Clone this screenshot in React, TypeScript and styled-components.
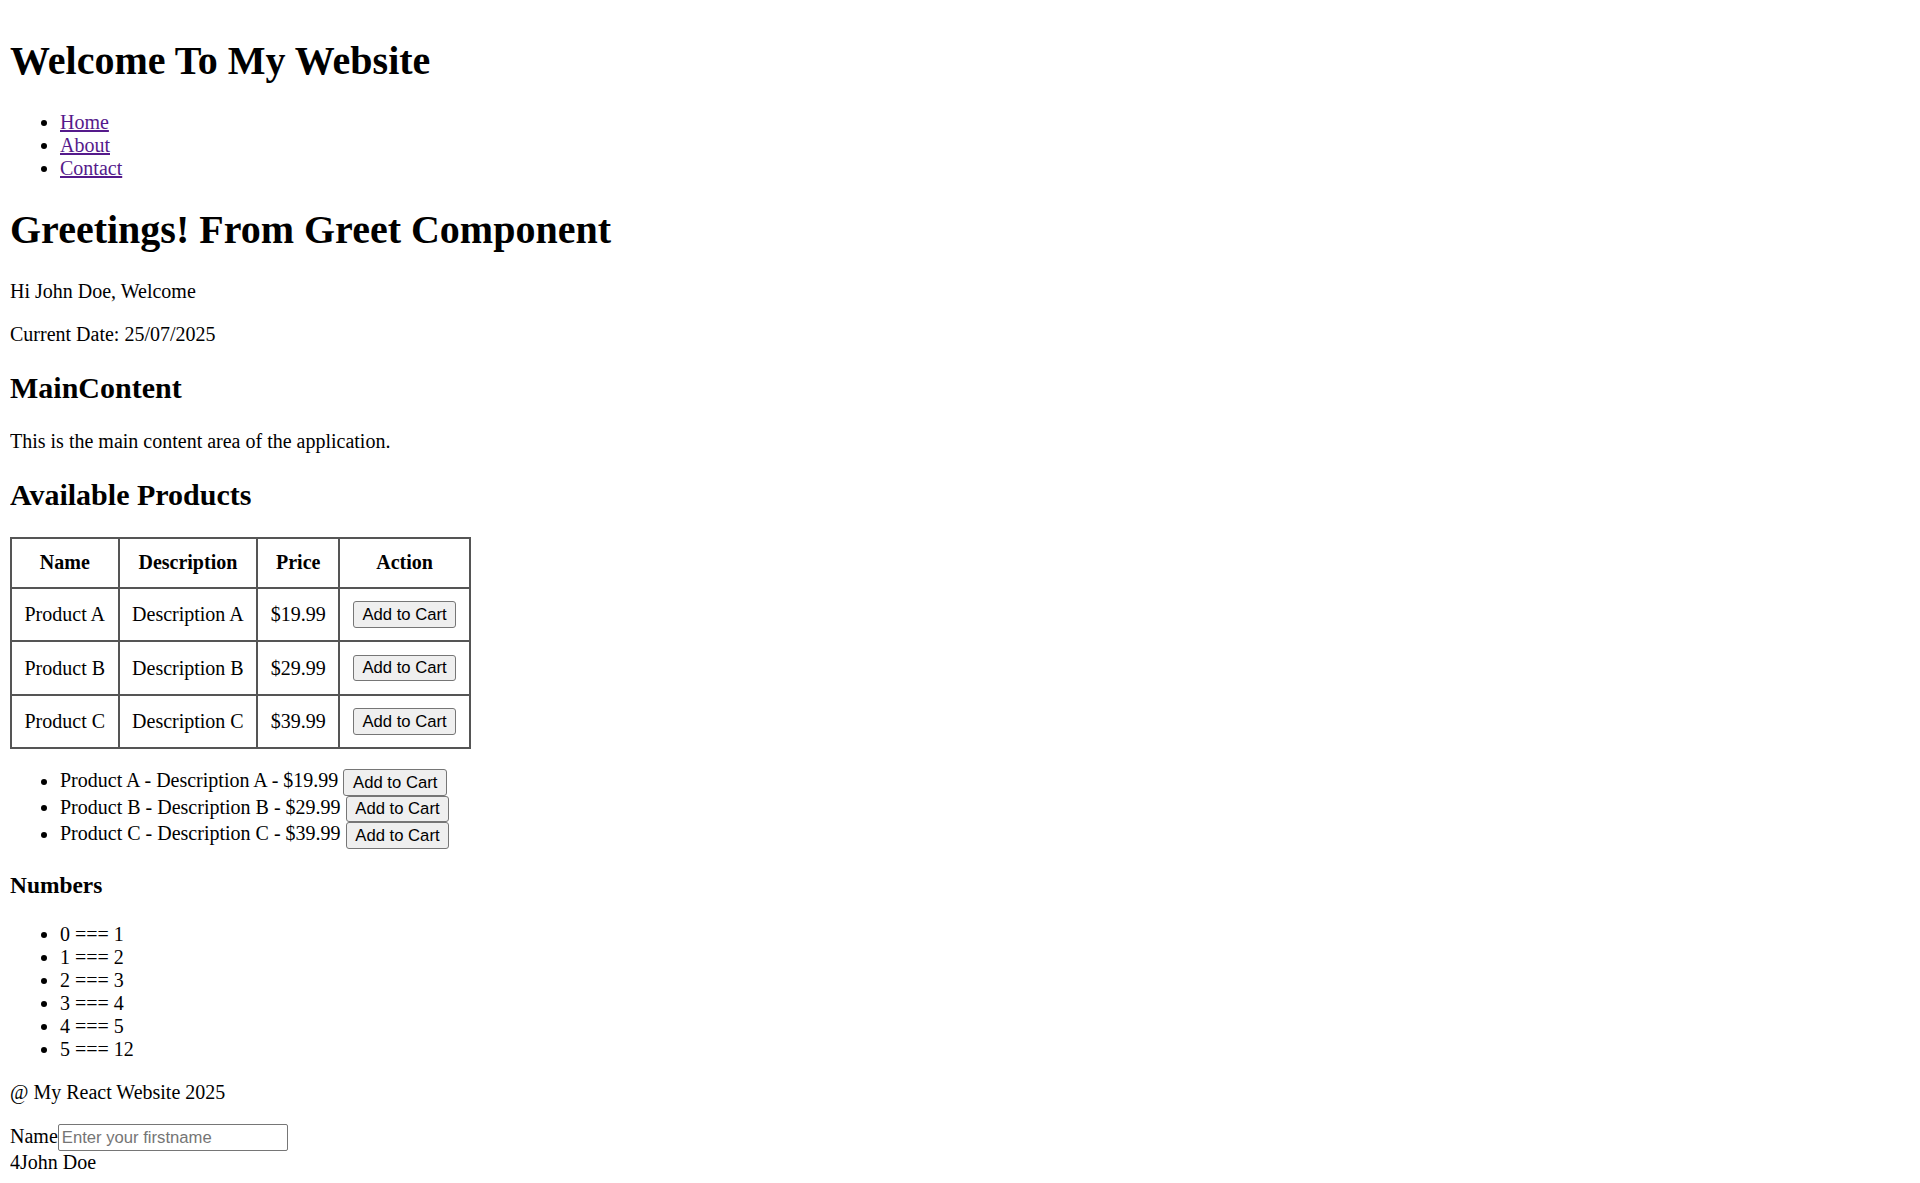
import React from 'react'
import styled, { createGlobalStyle } from 'styled-components'

const GlobalStyle = createGlobalStyle`
  body {
    margin: 10px;
    font-family: "Liberation Serif", "Times New Roman", serif;
    font-size: 20px;
    color: #000;
    background: #fff;
  }
`

const Title = styled.h1`
  font-size: 40px;
  font-weight: bold;
  margin: 26.8px 0;
`

const SubTitle = styled.h2`
  font-size: 30px;
  font-weight: bold;
  margin: 24.9px 0;
`

const SmallTitle = styled.h3`
  font-size: 23.4px;
  font-weight: bold;
  margin: 23.4px 0;
`

const Text = styled.p`
  margin: 20px 0;
`

const BulletList = styled.ul`
  margin: 20px 0;
  padding-left: 50px;
  list-style: disc;
`

const NavLink = styled.a`
  color: #551a8b;
  text-decoration: underline;
`

const Table = styled.table`
  border: 1px solid #555;
  border-spacing: 0;
  margin: 0;
`

const HeadCell = styled.th`
  border: 1px solid #555;
  padding: 12.5px;
  font-weight: bold;
  text-align: center;
`

const Cell = styled.td`
  border: 1px solid #555;
  padding: 12.5px;
  text-align: center;
`

const CartButton = styled.button`
  font-family: "Liberation Sans", Arial, sans-serif;
  font-size: 16.67px;
  line-height: normal;
  padding: 2.25px 8.75px;
  background: #efefef;
  color: #000;
  border: 1px solid #767676;
  border-radius: 3px;
  margin: 0;
`

const FormRow = styled.div`
  display: block;
`

const NameInput = styled.input`
  font-family: "Liberation Sans", Arial, sans-serif;
  font-size: 16.67px;
  padding: 3.25px 3px 1.75px;
  width: 222px;
  border: 1px solid #767676;
  border-radius: 2px;
  margin: 0;
  &::placeholder {
    color: #757575;
  }
`

const products = [
  { name: 'Product A', description: 'Description A', price: '$19.99' },
  { name: 'Product B', description: 'Description B', price: '$29.99' },
  { name: 'Product C', description: 'Description C', price: '$39.99' },
]

const numbers = [
  [0, 1],
  [1, 2],
  [2, 3],
  [3, 4],
  [4, 5],
  [5, 12],
]

const App: React.FC = () => {
  return (
    <>
      <GlobalStyle />
      <Title>Welcome To My Website</Title>
      <BulletList>
        <li><NavLink href="#">Home</NavLink></li>
        <li><NavLink href="#">About</NavLink></li>
        <li><NavLink href="#">Contact</NavLink></li>
      </BulletList>

      <Title>Greetings! From Greet Component</Title>
      <Text>Hi John Doe, Welcome</Text>
      <Text>Current Date: 25/07/2025</Text>

      <SubTitle>MainContent</SubTitle>
      <Text>This is the main content area of the application.</Text>

      <SubTitle>Available Products</SubTitle>
      <Table>
        <thead>
          <tr>
            <HeadCell>Name</HeadCell>
            <HeadCell>Description</HeadCell>
            <HeadCell>Price</HeadCell>
            <HeadCell>Action</HeadCell>
          </tr>
        </thead>
        <tbody>
          {products.map((p) => (
            <tr key={p.name}>
              <Cell>{p.name}</Cell>
              <Cell>{p.description}</Cell>
              <Cell>{p.price}</Cell>
              <Cell><CartButton>Add to Cart</CartButton></Cell>
            </tr>
          ))}
        </tbody>
      </Table>

      <BulletList>
        {products.map((p) => (
          <li key={p.name}>
            {p.name} - {p.description} - {p.price} <CartButton>Add to Cart</CartButton>
          </li>
        ))}
      </BulletList>

      <SmallTitle>Numbers</SmallTitle>
      <BulletList>
        {numbers.map(([a, b]) => (
          <li key={a}>{a} === {b}</li>
        ))}
      </BulletList>

      <Text>@ My React Website 2025</Text>
      <FormRow>
        <label>Name</label>
        <NameInput type="text" placeholder="Enter your firstname" />
      </FormRow>
      <div>4John Doe</div>
    </>
  )
}

export default App
